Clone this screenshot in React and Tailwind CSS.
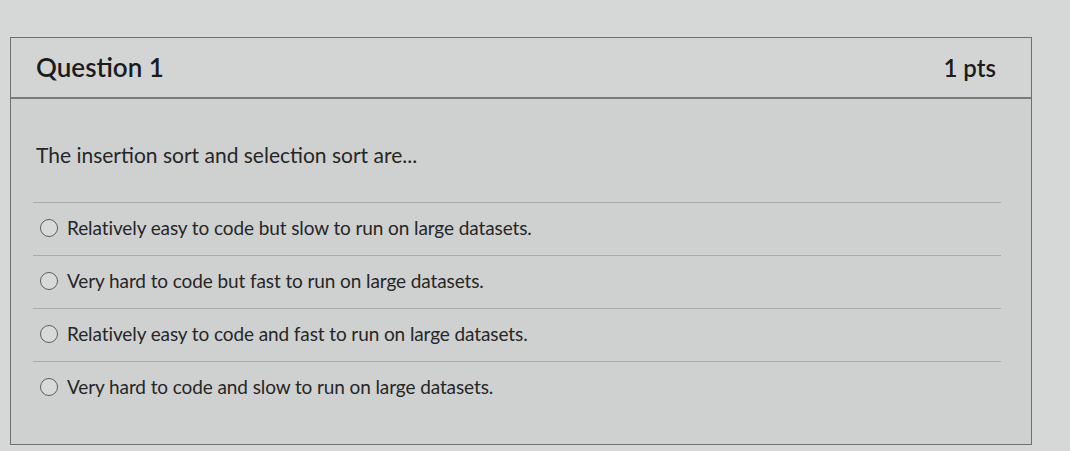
export default function App() {
  const answers = [
    "Relatively easy to code but slow to run on large datasets.",
    "Very hard to code but fast to run on large datasets.",
    "Relatively easy to code and fast to run on large datasets.",
    "Very hard to code and slow to run on large datasets.",
  ];
  return (
    <div
      className="w-[1070px] h-[451px] bg-[#d6d8d8] pt-[37px] pl-[10px] overflow-hidden"
      style={{ fontFamily: "Lato, 'Noto Sans', sans-serif" }}
    >
      <div className="w-[1022px] h-[408px] border border-[#6f7070] bg-[#cfd1d1] flex flex-col">
        <div className="h-[61px] bg-[#d3d5d5] border-b-2 border-[#7a7b7b] flex items-center justify-between pl-[25px] pr-[35px]">
          <span className="text-[26px] font-semibold text-[#1c1c1c]">Question 1</span>
          <span className="text-[24px] font-semibold text-[#1c1c1c]">1 pts</span>
        </div>
        <div className="pl-[22px] pr-[30px] pt-[43px]">
          <p className="text-[21px] text-[#262626] leading-[26px] pl-[3px]">
            The insertion sort and selection sort are...
          </p>
          <div className="mt-[34px]">
            {answers.map((a, i) => (
              <div key={i} className="border-t border-[#a9abab] h-[53px] flex items-center pl-[7px] pb-[2px]">
                <span className="w-[18px] h-[18px] rounded-full border-[1.5px] border-[#5e6060] bg-[#d8dada] mr-[9px]" />
                <span className="text-[19px] text-[#262626] tracking-[-0.1px]">{a}</span>
              </div>
            ))}
          </div>
        </div>
      </div>
    </div>
  );
}
